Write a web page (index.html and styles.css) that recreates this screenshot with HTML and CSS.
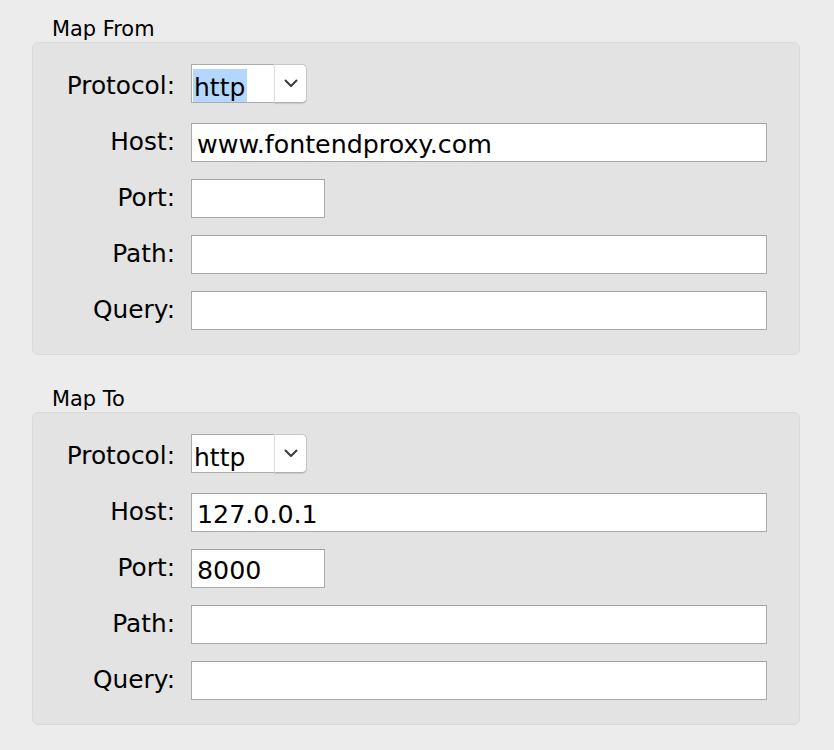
FILE: index.html
```html
<!DOCTYPE html>
<html>
<head>
<meta charset="utf-8">
<link rel="stylesheet" href="styles.css">
</head>
<body>
<div class="page">
  <section class="group">
    <div class="group-title">Map From</div>
    <div class="group-box">
      <div class="form">
        <label class="label label-first">Protocol:</label>
        <div class="combo combo-first">
          <div class="combo-field"><span class="sel">http</span></div>
          <div class="combo-btn">
            <svg width="14" height="9" viewBox="0 0 14 9"><path d="M1.5 1.5 L7 7 L12.5 1.5" fill="none" stroke="#3a3a3a" stroke-width="2" stroke-linecap="round" stroke-linejoin="round"/></svg>
          </div>
        </div>
        <label class="label">Host:</label>
        <input class="field wide" type="text" value="www.fontendproxy.com">
        <label class="label">Port:</label>
        <input class="field short" type="text" value="">
        <label class="label">Path:</label>
        <input class="field wide" type="text" value="">
        <label class="label">Query:</label>
        <input class="field wide" type="text" value="">
      </div>
    </div>
  </section>
  <section class="group">
    <div class="group-title">Map To</div>
    <div class="group-box">
      <div class="form">
        <label class="label label-first">Protocol:</label>
        <div class="combo combo-first">
          <div class="combo-field"><span class="plain">http</span></div>
          <div class="combo-btn">
            <svg width="14" height="9" viewBox="0 0 14 9"><path d="M1.5 1.5 L7 7 L12.5 1.5" fill="none" stroke="#3a3a3a" stroke-width="2" stroke-linecap="round" stroke-linejoin="round"/></svg>
          </div>
        </div>
        <label class="label">Host:</label>
        <input class="field wide" type="text" value="127.0.0.1">
        <label class="label">Port:</label>
        <input class="field short" type="text" value="8000">
        <label class="label">Path:</label>
        <input class="field wide" type="text" value="">
        <label class="label">Query:</label>
        <input class="field wide" type="text" value="">
      </div>
    </div>
  </section>
</div>
</body>
</html>
```
FILE: styles.css
```css
html, body {
  margin: 0;
  padding: 0;
  background: #ececec;
}
body {
  font-family: "DejaVu Sans", "Liberation Sans", sans-serif;
  color: #000;
  width: 834px;
  height: 750px;
  overflow: hidden;
}
.page {
  padding: 17px 0 0 32px;
  display: flex;
  flex-direction: column;
  gap: 32px;
}
.group-title {
  font-size: 20.9px;
  line-height: 24px;
  padding-left: 20px;
  margin-bottom: 1px;
}
.group-box {
  width: 766px;
  background: #e3e3e3;
  border: 1px solid #dadada;
  border-radius: 6px;
}
.form {
  display: grid;
  grid-template-columns: 142px auto;
  column-gap: 16px;
  row-gap: 17px;
  padding: 21px 0 24px 0;
  justify-items: start;
  align-items: start;
}
.label {
  justify-self: end;
  font-size: 24.8px;
  line-height: 37px;
  padding-top: 0;
  height: 39px;
  box-sizing: border-box;
}
.label-first {
  margin-bottom: 3px;
  padding-top: 3px;
}
.field {
  box-sizing: border-box;
  height: 39px;
  margin: 0;
  border: 1px solid #ababab;
  border-top-color: #a2a2a2;
  background: #fff;
  font-family: "DejaVu Sans", "Liberation Sans", sans-serif;
  font-size: 25.3px;
  color: #000;
  padding: 4px 5px 0 5px;
  outline: none;
  border-radius: 0;
}
.wide { width: 576px; }
.short { width: 134px; }
.combo {
  display: flex;
  height: 39px;
}
.combo-first {
  margin-bottom: 3px;
}
.combo-field {
  box-sizing: border-box;
  width: 83px;
  height: 39px;
  background: #fff;
  border: 1px solid #ababab;
  border-right: none;
  padding-left: 1px;
  padding-top: 4px;
  display: flex;
  align-items: center;
  font-size: 25px;
}
.sel {
  display: inline-block;
  background: #b3d7ff;
  line-height: 29px;
  padding: 4px 2px 0 1px;
}
.plain {
  display: inline-block;
  line-height: 29px;
  padding: 4px 2px 0 1px;
}
.combo-btn {
  box-sizing: border-box;
  width: 33px;
  height: 39px;
  background: #fff;
  border: 1px solid #c6c6c6;
  border-left: 1px solid #dedede;
  border-bottom-color: #aeaeae;
  border-radius: 0 5px 5px 0;
  box-shadow: 0 1px 1px rgba(0, 0, 0, 0.12);
  display: flex;
  align-items: center;
  justify-content: center;
}
```
